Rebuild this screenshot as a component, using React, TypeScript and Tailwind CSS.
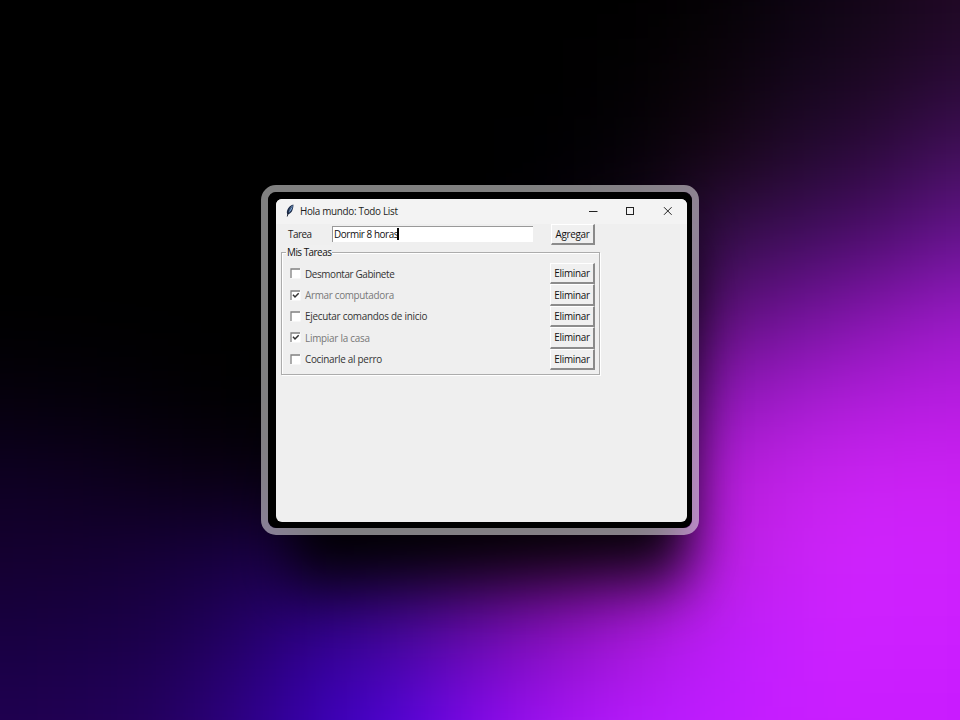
import React from "react";

// Colour mesh of the wallpaper: 13 x 10 knots, one every 80px.
const mesh: string[][] = [
  ["#000000", "#000000", "#000000", "#000000", "#000000", "#000000", "#000000", "#000000", "#000000", "#040104", "#0c0410", "#140618", "#200824"],
  ["#000000", "#000000", "#000000", "#000000", "#000000", "#000000", "#000000", "#000000", "#030103", "#0c040b", "#14061c", "#1e0824", "#2a0a38"],
  ["#000000", "#000000", "#000000", "#000000", "#000000", "#000000", "#000000", "#000002", "#060208", "#180618", "#240a30", "#300a42", "#461060"],
  ["#000000", "#000000", "#000000", "#000000", "#000000", "#000000", "#000000", "#040008", "#180620", "#340e4a", "#420e60", "#520e74", "#681492"],
  ["#000000", "#000000", "#000000", "#000000", "#000000", "#000000", "#080010", "#100018", "#300840", "#60107e", "#74129c", "#8a16b4", "#9c1ac8"],
  ["#05000c", "#04000a", "#020005", "#000000", "#000000", "#040008", "#140020", "#300640", "#600a80", "#9018b8", "#a41cd0", "#b21cdc", "#b81ce2"],
  ["#0e0024", "#0e0020", "#0b0018", "#090012", "#080014", "#10001c", "#380840", "#600c70", "#9016b0", "#b41cd8", "#c422ea", "#cc22f4", "#cc20f4"],
  ["#150030", "#150032", "#16003a", "#180042", "#200054", "#300864", "#500a72", "#740e90", "#9816bc", "#b81ee0", "#ca22f6", "#d022ff", "#ce20fc"],
  ["#180042", "#190046", "#1c004c", "#240068", "#300090", "#46069c", "#680aae", "#8810c0", "#a618d8", "#bc1cfa", "#c820ff", "#ce20ff", "#cc1eff"],
  ["#200050", "#210055", "#240060", "#2e0084", "#3a00b4", "#5204d8", "#8408ec", "#a614f4", "#b81aff", "#c01cff", "#c81eff", "#ca1cff", "#c81aff"],
];

function Wallpaper() {
  return (
    <svg className="absolute inset-0" width="960" height="720" viewBox="0 0 960 720" aria-hidden="true">
      <defs>
        <filter id="soft" filterUnits="userSpaceOnUse" x="-160" y="-160" width="1280" height="1040" colorInterpolationFilters="sRGB">
          <feGaussianBlur stdDeviation="40" />
        </filter>
        <filter id="shade" filterUnits="userSpaceOnUse" x="100" y="60" width="760" height="660">
          <feGaussianBlur stdDeviation="27 33" />
        </filter>
      </defs>
      <g filter="url(#soft)">
        {mesh.map((row, r) =>
          row.map((color, c) => {
            const left = c === 0 ? -160 : c * 80 - 40;
            const right = c === 12 ? 1120 : c * 80 + 40;
            const top = r === 0 ? -160 : r * 80 - 40;
            const bottom = r === 9 ? 880 : r * 80 + 40;
            return <rect key={`${r}-${c}`} x={left} y={top} width={right - left} height={bottom - top} fill={color} shapeRendering="crispEdges" />;
          })
        )}
      </g>
      <rect x="286" y="225" width="404" height="355" rx="24" fillOpacity=".97" filter="url(#shade)" />
    </svg>
  );
}

function Feather() {
  return (
    <svg width="10" height="13" viewBox="0 0 10 13" aria-hidden="true">
      <path d="M8.3.6C5.7 1.2 3.2 3.6 2.2 6.2 1.6 8 1.8 9.4 2.4 10.3L1.8 12.4l.7.1.6-2.1C5 9.800 6.700 8.200 7.400 6.200 8.100 4.200 8.700 2.400 8.300.6z" fill="#1b2a48" />
      <path d="M7.900 1.200C5.600 2.800 3.900 5.200 3.300 9.300 5.700 7.600 7.500 4.600 7.900 1.200z" fill="#7fa9da" />
      <path d="M6.900 2.600C5 4.800 3.300 7.800 2.300 12.200" fill="none" stroke="#101622" strokeWidth=".6" />
    </svg>
  );
}

function TitleBar() {
  return (
    <div className="flex h-[25px] items-center bg-[#f3f3f3]">
      <div className="ml-[9px] flex w-[15px] pb-[2px]">
        <Feather />
      </div>
      <div className="flex-1 pb-[2px] tracking-[-0.3px] text-[#1c1c1c]">Hola mundo: Todo List</div>
      <svg className="mr-[14px]" width="86" height="11" viewBox="0 0 86 11" fill="none" stroke="#222" aria-hidden="true">
        <path d="M2 5.500h8.500" />
        <rect x="39.500" y="1.500" width="7" height="7" />
        <path d="M77 1.200l7.600 7.600M84.600 1.200L77 8.800" />
      </svg>
    </div>
  );
}

function TkButton({ children, className }: { children: React.ReactNode; className: string }) {
  return (
    <button
      className={`flex items-center justify-center whitespace-nowrap border-t border-r-2 border-b-2 border-l border-t-white border-r-[#8a8a8a] border-b-[#8c8c8c] border-l-white bg-[#f0f0f0] tracking-[-0.28px] text-[#111] ${className}`}
    >
      {children}
    </button>
  );
}

function Check({ on }: { on: boolean }) {
  return (
    <svg width="11" height="11" viewBox="0 0 11 11" aria-hidden="true">
      <rect width="10" height="10" x=".5" y=".5" fill="#fff" />
      <path d="M1 10V1H10" fill="none" stroke="#808080" strokeWidth="1.300" />
      {on && <path d="M3 4.800L5 7 8.700 3.200" fill="none" stroke="#333" strokeWidth="1.500" />}
    </svg>
  );
}

const tasks = [
  { label: "Desmontar Gabinete", done: false, tracking: "tracking-[-0.37px]" },
  { label: "Armar computadora", done: true, tracking: "tracking-[-0.3px]" },
  { label: "Ejecutar comandos de inicio", done: false, tracking: "tracking-[-0.25px]" },
  { label: "Limpiar la casa", done: true, tracking: "tracking-[-0.24px]" },
  { label: "Cocinarle al perro", done: false, tracking: "tracking-[-0.27px]" },
];

export default function App() {
  return (
    <main className="relative flex h-[720px] w-[960px] items-center justify-center overflow-hidden bg-black font-['Open_Sans','Noto_Sans',sans-serif] text-[9.9px] leading-[14px]">
      <Wallpaper />
      <div className="relative h-[350px] w-[438px] rounded-[15px] border-[7px] border-white/50">
        <div className="h-full rounded-[9px] bg-black pt-[7px] pl-2">
          <div className="h-[323px] w-[411px] overflow-hidden rounded-[6px] bg-[#efefef]">
            <TitleBar />
            <div className="flex h-[21px] items-center">
              <label className="ml-3 w-[44px] pb-px tracking-[-0.52px] text-[#222]">Tarea</label>
              <div className="mb-px flex h-4 w-[201px] items-center border-t border-l border-[#999] bg-white pb-px pl-px text-[#111]">
                <span className="tracking-[-0.41px]">Dormir 8 horas</span>
                <span className="-ml-px h-3 w-[2px] bg-black" />
              </div>
              <TkButton className="ml-[18px] h-[21px] w-[44px]">Agregar</TkButton>
            </div>
            <div className="ml-[5px] w-[319px] pt-[7px]">
              <div className="relative h-[123px] border border-[#acacac] shadow-[1px_1px_0_#fff,inset_1px_1px_0_#fff]">
                <div className="absolute -top-[8px] left-[4px] bg-[#f0f0f0] px-px tracking-[-0.5px] text-[#111]">Mis Tareas</div>
                <ul className="flex flex-col pt-[10px] pr-1 pl-[8px]">
                  {tasks.map((task) => (
                    <li key={task.label} className="flex h-[21.400px] items-center">
                      <Check on={task.done} />
                      <span className={`ml-1 flex-1 ${task.tracking} ${task.done ? "text-[#777]" : "text-[#333]"}`}>{task.label}</span>
                      <TkButton className="h-[21.400px] w-[45px]">Eliminar</TkButton>
                    </li>
                  ))}
                </ul>
              </div>
            </div>
          </div>
        </div>
      </div>
    </main>
  );
}
